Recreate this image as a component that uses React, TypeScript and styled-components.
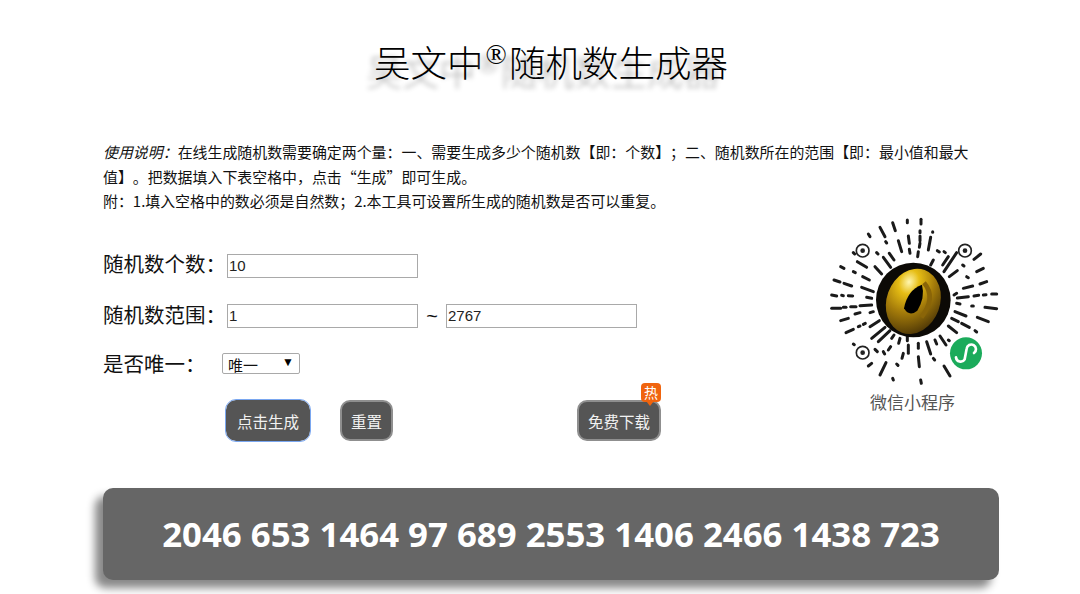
import React from "react"
import styled, { createGlobalStyle } from "styled-components"

const RAYS = [
	[262, 30, 262, 38], [303, 28, 303, 42], [218, 38, 226, 62], [180, 52, 195, 80], [145, 72, 150, 80],
	[300, 62, 300, 68], [300, 78, 300, 92], [338, 65, 338, 67], [265, 78, 268, 100], [332, 82, 325, 120],
	[197, 95, 200, 99], [235, 92, 245, 125], [300, 100, 298, 112], [352, 122, 358, 126], [268, 118, 270, 130],
	[208, 130, 222, 150], [190, 142, 212, 172], [112, 155, 140, 172], [100, 128, 104, 132], [170, 128, 174, 132],
	[295, 125, 293, 140], [340, 150, 332, 165], [385, 140, 368, 165], [372, 125, 376, 128], [410, 128, 372, 185],
	[482, 132, 462, 148], [428, 165, 432, 168], [412, 182, 388, 200], [490, 175, 470, 185], [62, 170, 72, 175],
	[100, 185, 106, 188], [128, 200, 148, 210], [42, 210, 60, 216], [72, 220, 95, 228], [125, 232, 160, 245],
	[165, 170, 185, 192], [440, 200, 445, 203], [500, 215, 480, 222], [430, 235, 458, 228], [410, 250, 402, 255],
	[35, 255, 50, 258], [65, 256, 70, 257], [85, 257, 98, 258], [140, 262, 155, 265], [412, 264, 445, 260],
	[462, 258, 476, 256], [490, 255, 498, 254], [515, 252, 530, 252], [35, 295, 62, 295], [70, 292, 78, 292],
	[92, 290, 108, 290], [120, 287, 155, 285], [410, 280, 420, 282], [455, 288, 460, 288], [495, 292, 530, 296],
	[62, 332, 85, 325], [105, 312, 120, 308], [150, 308, 160, 305], [405, 305, 438, 318], [472, 322, 505, 335],
	[78, 368, 100, 358], [115, 350, 120, 348], [130, 343, 136, 340], [150, 350, 178, 332], [395, 325, 415, 335],
	[425, 340, 448, 352], [100, 402, 103, 404], [155, 385, 195, 352], [175, 395, 210, 362], [385, 348, 410, 368],
	[465, 362, 470, 366], [145, 468, 155, 460], [180, 495, 198, 458], [205, 420, 212, 410], [215, 385, 222, 375],
	[165, 418, 172, 425], [240, 385, 236, 400], [230, 462, 234, 466], [262, 380, 262, 392], [265, 405, 265, 430],
	[295, 440, 298, 470], [295, 400, 295, 415], [320, 395, 332, 432], [345, 390, 350, 402], [360, 378, 378, 405],
	[372, 468, 390, 498], [302, 510, 304, 520], [218, 505, 220, 510], [250, 430, 246, 445], [340, 445, 344, 450],
	[385, 390, 388, 392], [190, 425, 194, 432]
]

const Wechat = () => (
	<svg width="190" height="190" viewBox="0 0 570 570">
		<defs>
			<radialGradient id="gold" cx="30%" cy="25%" r="85%">
				<stop offset="0%" stopColor="#fff6b0" />
				<stop offset="22%" stopColor="#e6bd14" />
				<stop offset="55%" stopColor="#a57c0a" />
				<stop offset="100%" stopColor="#4a3406" />
			</radialGradient>
		</defs>
		<g stroke="#1a1a1a" strokeWidth="9" strokeLinecap="round">
			{RAYS.map((r, i) => (
				<line key={i} x1={r[0]} y1={r[1]} x2={r[2]} y2={r[3]} />
			))}
		</g>
		{[[128, 122], [435, 122], [128, 428]].map((c, i) => (
			<g key={i}>
				<circle cx={c[0]} cy={c[1]} r="19" fill="#fff" stroke="#222" strokeWidth="5" />
				<circle cx={c[0]} cy={c[1]} r="7" fill="#222" />
			</g>
		))}
		<circle cx="280" cy="270" r="112" fill="#0c0a06" />
		<ellipse cx="280" cy="274" rx="80" ry="100" transform="rotate(20 280 274)" fill="url(#gold)" />
		<path d="M252 295 Q262 240 306 224 Q316 262 292 302 Q268 322 252 295 Z" fill="#000" />
		<path d="M312 218 Q350 262 304 322" fill="none" stroke="#8a6508" strokeWidth="14" />
		<circle cx="438" cy="430" r="48" fill="#1bab5b" />
		<path
			d="M408 442 a14 14 0 0 0 26 6 l6 -32 a14 14 0 1 1 22 13"
			fill="none"
			stroke="#fff"
			strokeWidth="8"
			strokeLinecap="round"
		/>
	</svg>
)

const App: React.FC = () => {
	return (
		<Page>
			<GlobalStyle />
			<Title>
				吴文中<Mark>®</Mark>随机数生成器
			</Title>
			<Intro>
				<em>使用说明：</em>在线生成随机数需要确定两个量：一、需要生成多少个随机数【即：个数】；二、随机数所在的范围【即：最小值和最大值】。把数据填入下表空格中，点击“生成”即可生成。
				<br />
				附：1.填入空格中的数必须是自然数；2.本工具可设置所生成的随机数是否可以重复。
			</Intro>
			<Middle>
				<Form>
					<Row>
						<Label>随机数个数：</Label>
						<Field defaultValue="10" />
					</Row>
					<Row>
						<Label>随机数范围：</Label>
						<Field defaultValue="1" />
						<Tilde>~</Tilde>
						<Field defaultValue="2767" />
					</Row>
					<SelectRow>
						<Label>是否唯一：</Label>
						<SelectBox>
							<Select defaultValue="唯一">
								<option>唯一</option>
								<option>可重复</option>
							</Select>
						</SelectBox>
					</SelectRow>
					<Buttons>
						<Btn $focus>点击生成</Btn>
						<Btn>重置</Btn>
						<Download>
							<Btn>免费下载</Btn>
							<Hot>热</Hot>
						</Download>
					</Buttons>
				</Form>
				<Side>
					<Wechat />
					<SideText>微信小程序</SideText>
				</Side>
			</Middle>
			<Result>2046 653 1464 97 689 2553 1406 2466 1438 723</Result>
		</Page>
	)
}

export default App

const GlobalStyle = createGlobalStyle`
	html, body {
		margin: 0;
		padding: 0;
		background: #fff;
		overflow: hidden;
	}
	* {
		text-spacing-trim: space-all;
	}
`

const cjk = `"Noto Sans CJK SC", sans-serif`

const Page = styled.div`
	width: 1080px;
	height: 594px;
	padding: 0 70px 0 103px;
	box-sizing: border-box;
	font-family: "Liberation Sans", ${cjk};
	color: #111;
`

const Title = styled.h1`
	margin: 0;
	padding-top: 35px;
	width: 896px;
	height: 100px;
	box-sizing: border-box;
	text-align: center;
	font-family: ${cjk};
	font-size: 36.5px;
	line-height: 54px;
	font-weight: 300;
	color: #000;
	text-shadow: -8px 9px 5px #b5b5b5;
`

const Mark = styled.span`
	margin: 0 2px;
	font-family: "Liberation Serif", serif;
	font-size: 28px;
	vertical-align: 13px;
	line-height: 0;
`

const Intro = styled.p`
	margin: 0;
	padding-top: 40px;
	width: 880px;
	font-family: ${cjk};
	font-size: 14.93px;
	line-height: 24.5px;
	font-weight: 400;
	color: #111;
	em {
		font-style: italic;
	}
`

const Middle = styled.div`
	display: flex;
	justify-content: space-between;
	width: 907px;
	margin-top: 17px;
`

const Form = styled.div`
	display: flex;
	flex-direction: column;
	padding-top: 10px;
`

const Row = styled.div`
	display: flex;
	align-items: center;
	height: 50.5px;
	label {
		margin-bottom: 5px;
	}
`

const SelectRow = styled(Row)`
	height: 43.5px;
	label {
		margin-bottom: 0;
	}
`

const Label = styled.label`
	width: 124px;
	font-family: ${cjk};
	font-size: 20.5px;
	font-weight: 400;
	color: #111;
`

const Field = styled.input`
	width: 191px;
	height: 24px;
	box-sizing: border-box;
	padding: 0 1px 1px;
	border: 1px solid #a9a9a9;
	font-family: "Liberation Sans", sans-serif;
	font-size: 15px;
	color: #222;
	outline: none;
`

const Tilde = styled.span`
	width: 28px;
	text-align: center;
	font-size: 20px;
`

const SelectBox = styled.div`
	position: relative;
	margin-left: -5px;
	&::after {
		content: "▼";
		position: absolute;
		right: 6px;
		top: 2px;
		font-size: 12px;
		color: #000;
		pointer-events: none;
	}
`

const Select = styled.select`
	display: block;
	width: 78px;
	height: 21px;
	box-sizing: border-box;
	padding: 0 5px;
	appearance: none;
	background: #fff;
	border: 1px solid #a9a9a9;
	border-radius: 2px;
	font-family: ${cjk};
	font-size: 15px;
	font-weight: 400;
	color: #111;
`

const Buttons = styled.div`
	display: flex;
	align-items: center;
	padding-left: 123px;
	margin-top: 15px;
	gap: 30px;
`

const Btn = styled.button<{ $focus?: boolean }>`
	display: block;
	height: 41px;
	padding: 0 9px;
	border: 2px solid #8f8f8f;
	border-radius: 10px;
	background: #555;
	color: #f2f2f2;
	font-family: ${cjk};
	font-size: 15.5px;
	font-weight: 400;
	${(p) => p.$focus && "border-color: #555; outline: 1px solid #7aa7f0; outline-offset: 0;"}
`

const Download = styled.div`
	position: relative;
	margin-left: 154px;
`

const Hot = styled.span`
	position: absolute;
	top: -17px;
	right: 0;
	width: 20px;
	height: 19px;
	border-radius: 4px;
	background: #f0640e;
	color: #fff;
	font-family: ${cjk};
	font-size: 14px;
	line-height: 18px;
	text-align: center;
	&::after {
		content: "";
		position: absolute;
		left: 5px;
		bottom: -4px;
		border-top: 5px solid #f0640e;
		border-left: 4px solid transparent;
		border-right: 4px solid transparent;
	}
`

const Side = styled.div`
	display: flex;
	flex-direction: column;
	align-items: center;
	width: 190px;
	margin-top: -21px;
`

const SideText = styled.div`
	margin-top: -10px;
	margin-right: 5px;
	font-family: ${cjk};
	font-size: 17px;
	line-height: 24px;
	color: #555;
`

const Result = styled.div`
	width: 896px;
	height: 92px;
	margin-top: 47px;
	border-radius: 10px;
	background: #666;
	box-shadow: -8px 8px 8px #888;
	color: #fff;
	font-family: "Open Sans", sans-serif;
	font-size: 34.8px;
	font-weight: 700;
	line-height: 92px;
	text-align: center;
`
